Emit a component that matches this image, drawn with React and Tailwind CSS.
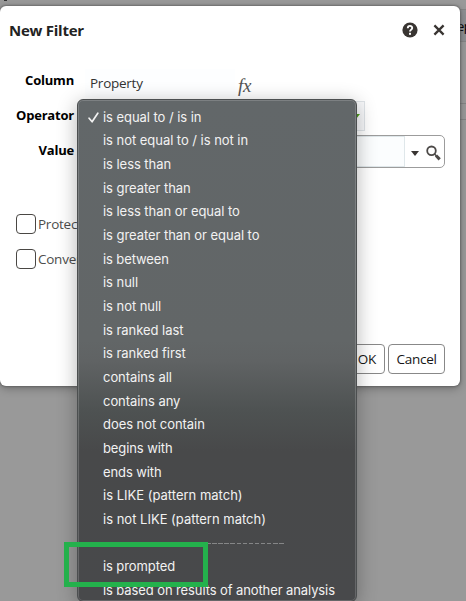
import React from "react";

const OPERATORS = [
  ["is equal to / is in", "tracking-[-0.05px]"],
  ["is not equal to / is not in", "tracking-[-0.04px]"],
  ["is less than", "tracking-[-0.05px]"],
  ["is greater than", "tracking-[-0.05px]"],
  ["is less than or equal to", "tracking-[-0.05px]"],
  ["is greater than or equal to", "tracking-[-0.05px]"],
  ["is between", "tracking-[-0.1px]"],
  ["is null", "tracking-[-0.05px]"],
  ["is not null", "tracking-[-0.05px]"],
  ["is ranked last", "tracking-[-0.05px]"],
  ["is ranked first", "tracking-[-0.05px]"],
  ["contains all", "tracking-[-0.05px]"],
  ["contains any", "tracking-[-0.05px]"],
  ["does not contain", "tracking-[-0.05px]"],
  ["begins with", "tracking-[-0.1px]"],
  ["ends with", "tracking-[-0.1px]"],
  ["is LIKE (pattern match)", "tracking-normal"],
  ["is not LIKE (pattern match)", "tracking-normal"],
  null,
  ["is prompted", "tracking-[-0.1px]"],
  ["is based on results of another analysis", "tracking-[-0.1px]"],
];

function OperatorMenu() {
  return (
    <div className="absolute left-[77px] top-[99px] h-[503px] w-[280px] rounded-[6px] border border-[#4c4f50] bg-[linear-gradient(180deg,#626769_0%,#626667_48%,#606364_52%,#4e5252_62%,#48494a_70%,#48494b_100%)] pt-[5.7px] font-['Inter',sans-serif] text-[13px] text-[#f2f2f2] shadow-[0_4px_20px_rgba(0,0,0,0.3),inset_0_0_0_1px_rgba(255,255,255,0.17)]">
      {OPERATORS.map((item, i) => (
        <div key={i} className="flex h-[23.67px] items-center">
          <div className="flex w-[25px] shrink-0 justify-end pr-[4px]">
            {i === 0 && (
              <svg className="h-[11px] w-[11px]" viewBox="0 0 11 11" fill="none" stroke="currentColor" strokeWidth="1.7" strokeLinecap="round" strokeLinejoin="round">
                <path d="M1.1 6.2 4.1 9.8 9.8 1.2" />
              </svg>
            )}
          </div>
          {item ? (
            <span className={"whitespace-nowrap " + item[1]}>{item[0]}</span>
          ) : (
            <div className="h-px w-[182px] bg-[repeating-linear-gradient(90deg,#858687_0_4.6px,transparent_4.6px_6.07px)]" />
          )}
        </div>
      ))}
    </div>
  );
}

function Row({ label, className, children }) {
  return (
    <div className={"flex items-center " + className}>
      <div className="w-[74px] shrink-0 text-right text-[13px] font-bold tracking-[-0.2px] text-black">{label}</div>
      {children}
    </div>
  );
}

function Check({ label }) {
  return (
    <div className="flex h-[20px] items-center gap-[2px]">
      <div className="h-[20px] w-[20px] rounded-[4px] border border-[#4a4744] bg-white" />
      <span className="text-[13.5px] tracking-[-0.25px] text-[#4d4d4d]">{label}</span>
    </div>
  );
}

export default function App() {
  return (
    <div className="relative h-[601px] w-[466px] overflow-hidden bg-[#999999] font-['Open_Sans','Noto_Sans',sans-serif]">
      <div className="absolute left-[4px] top-0 h-px w-[3px] bg-[#333333]" />
      <div className="absolute right-0 top-[9px] flex h-[33px] w-[9px] items-center border-y border-[#858585] bg-[#8d8f92] text-[13px] tracking-[-0.6px] text-black">
        <span className="mt-[2px]">ep</span>
      </div>
      <div className="absolute right-0 top-[103px] h-[17px] w-[8px] border-y border-[#858585]" />

      <div className="absolute left-0 top-[6px] flex h-[380px] w-[460px] flex-col rounded-[6px] bg-white shadow-[0_0_2px_1px_rgba(80,80,80,0.55),0_3px_8px_rgba(0,0,0,0.25)]">
        <div className="flex h-[48px] items-center pl-[9px] pr-[15px]">
          <h1 className="text-[15px] font-bold tracking-[-0.25px] text-[#222222]">New Filter</h1>
          <svg className="ml-auto h-[16px] w-[16px]" viewBox="0 0 16 16">
            <circle cx="8" cy="8" r="7.6" fill="#393532" />
            <path d="M5.8 6.2C5.8 3.1 10.3 3.2 10.2 6 10.2 7.6 8 7.7 8 9.6" fill="none" stroke="white" strokeWidth="1.9" />
            <rect x="7" y="10.8" width="2" height="2" fill="white" />
          </svg>
          <svg className="ml-[15px] h-[12px] w-[12px]" viewBox="0 0 12 12" fill="none" stroke="#393532" strokeWidth="2.3">
            <path d="M1.4 1.4 10.6 10.6M10.6 1.4 1.4 10.6" />
          </svg>
        </div>

        <div className="mt-[10px] flex flex-col">
          <Row label="Column" className="h-[34px]">
            <div className="ml-[11px] mt-[4px] flex h-[28px] w-[150px] items-center bg-[#fdfeff] pl-[5px] text-[13.5px] tracking-[-0.25px] text-[#333333]">Property</div>
            <div className="ml-[3px] mt-[10px] font-['Liberation_Serif',serif] text-[19px] italic leading-[20px] tracking-[-0.4px] text-[#555555]">fx</div>
          </Row>
          <Row label="Operator" className="h-[35px]">
            <div className="ml-[10px] mt-[1px] flex h-[30px] w-[281px] items-center justify-end border border-[#dfe4e8] bg-[#f8f9fb] pr-[4px]">
              <svg className="h-[5px] w-[8px]" viewBox="0 0 8 5"><path d="M0 0H8L4 5Z" fill="#4b9b17" /></svg>
            </div>
          </Row>
          <Row label="Value" className="h-[35px]">
            <div className="ml-[10px] mt-[2px] flex h-[33px] w-[361px] items-center rounded-[5px] border border-[#9c9c9c] bg-white">
              <div className="h-[31px] w-[320px] border border-[#dfe7ea] bg-[#fbfdfe]" />
              <svg className="ml-[6px] mt-[4px] h-[5px] w-[8px]" viewBox="0 0 8 5"><path d="M0 0H8L4 5Z" fill="#393532" /></svg>
              <svg className="ml-[7px] mt-[3px] h-[16px] w-[15px]" viewBox="0 0 15 16" fill="none" stroke="#4c4947">
                <circle cx="5.5" cy="5.8" r="4.3" strokeWidth="1.8" />
                <path d="M8.6 9.1 10.4 11" strokeWidth="1.4" />
                <path d="M10 10.5 13.7 14.4" strokeWidth="3" />
              </svg>
            </div>
          </Row>
        </div>

        <div className="mt-[46px] flex flex-col gap-[15px] pl-[16px]">
          <Check label="Protect" />
          <Check label="Convert" />
        </div>

        <div className="mb-[12px] mr-[15px] mt-auto flex justify-end gap-[3.5px] text-[13.5px] tracking-[-0.25px] text-[#161616]">
          <button className="h-[30px] w-[36px] rounded-[4px] border border-[#888888] bg-white pl-px">OK</button>
          <button className="h-[30px] w-[57px] rounded-[4px] border border-[#888888] bg-white">Cancel</button>
        </div>
      </div>

      <OperatorMenu />
      <div className="absolute left-[64px] top-[542px] h-[45px] w-[144px] border-[5px] border-[#24b14c]" />
    </div>
  );
}
